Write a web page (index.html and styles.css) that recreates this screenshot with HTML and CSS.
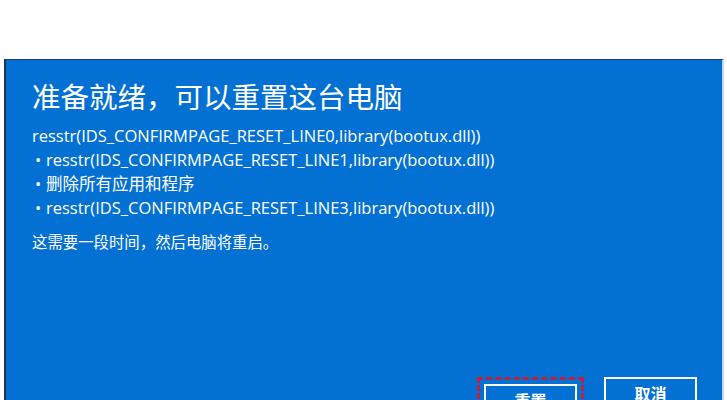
FILE: index.html
```html
<!DOCTYPE html>
<html lang="zh-CN">
<head>
<meta charset="utf-8">
<link rel="stylesheet" href="styles.css">
</head>
<body>
<div class="panel">
  <h1 class="title">准备就绪，可以重置这台电脑</h1>
  <div class="lines">
    <p class="line">resstr(IDS_CONFIRMPAGE_RESET_LINE0,library(bootux.dll))</p>
    <p class="line bullet">resstr(IDS_CONFIRMPAGE_RESET_LINE1,library(bootux.dll))</p>
    <p class="line bullet">删除所有应用和程序</p>
    <p class="line bullet">resstr(IDS_CONFIRMPAGE_RESET_LINE3,library(bootux.dll))</p>
  </div>
  <p class="note">这需要一段时间，然后电脑将重启。</p>
  <div class="actions">
    <div class="focus"><button class="btn">重置</button></div>
    <button class="btn">取消</button>
  </div>
</div>
</body>
</html>
```
FILE: styles.css
```css
html, body {
  margin: 0;
  padding: 0;
  background: #ffffff;
  overflow: hidden;
  height: 400px;
}
body {
  font-family: "Open Sans", "Noto Sans CJK SC", sans-serif;
  color: #ffffff;
}
.panel {
  margin: 59px 0 0 4px;
  width: 720px;
  height: 341px;
  overflow: hidden;
  background: #0371d3;
  border-top: 1px solid #1a3f6a;
  border-left: 2px solid #1d3550;
  border-right: 2px solid #c9d6e6;
  padding: 0 0 0 26px;
  box-sizing: border-box;
}
.title {
  margin: 0;
  padding-top: 18px;
  font-family: "Noto Sans CJK SC", sans-serif;
  font-weight: 400;
  font-size: 28.5px;
  line-height: 36px;
}
.lines {
  margin-top: 10px;
}
.line {
  margin: 0;
  font-size: 16.5px;
  line-height: 24px;
  white-space: nowrap;
}
.bullet::before {
  content: "•";
  display: inline-block;
  width: 11px;
  padding-left: 3px;
}
.note {
  margin: 9px 0 0;
  font-family: "Noto Sans CJK SC", sans-serif;
  font-size: 15.4px;
  line-height: 24px;
}
.actions {
  display: flex;
  justify-content: flex-end;
  align-items: flex-start;
  gap: 20px;
  padding-right: 25px;
  margin-top: 124px;
}
.focus {
  border: 3px dashed #c41f3c;
  padding: 4px;
}
.btn {
  width: 93px;
  height: 32px;
  background: transparent;
  border: 2px solid #ffffff;
  color: #ffffff;
  font-family: "Noto Sans CJK SC", sans-serif;
  font-size: 16px;
  font-weight: 700;
  padding: 0;
}
```
